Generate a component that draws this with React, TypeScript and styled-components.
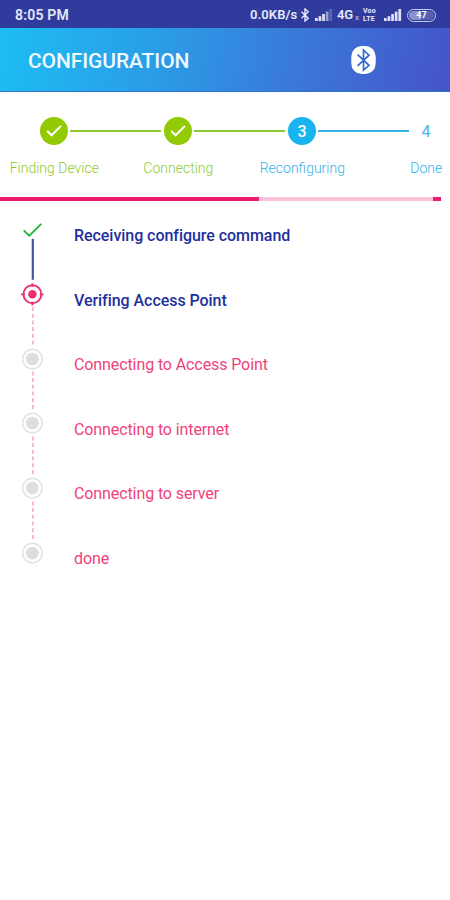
import React from "react";
import styled, { createGlobalStyle } from "styled-components";

const GlobalStyle = createGlobalStyle`
  * { box-sizing: border-box; }
  body { margin: 0; background: #fff; font-family: Roboto, "Liberation Sans", sans-serif; overflow: hidden; }
  svg { display: block; flex: none; }
`;

const Screen = styled.main`
  width: 450px;
  height: 900px;
  background: #fff;
  display: flex;
  flex-direction: column;
  overflow: hidden;
`;

const StatusBar = styled.div`
  flex: none;
  height: 28px;
  padding: 2px 14px 0 15px;
  background: #303c9d;
  color: #e6e9fa;
  display: flex;
  align-items: center;
  font-size: 14px;
  font-weight: 600;
  line-height: 26px;
  white-space: nowrap;
`;

const Clock = styled.span`
  flex: 1;
  letter-spacing: 0.2px;
`;

const Tray = styled.div`
  display: flex;
  align-items: center;
  height: 26px;
`;

const Speed = styled.span`
  width: 50px;
  font-size: 13px;
  letter-spacing: 0.1px;
`;

const Network = styled.span`
  width: 18px;
  margin-left: 4px;
  font-size: 13px;
  letter-spacing: -0.3px;
`;

const RoamMark = styled.span`
  width: 8px;
  font-size: 8px;
  padding-top: 5px;
  opacity: 0.6;
`;

const Volte = styled.span`
  width: 15px;
  margin-right: 6px;
  display: flex;
  flex-direction: column;
  font-size: 7px;
  line-height: 8px;
  font-weight: 700;
  letter-spacing: 0.2px;
`;

const Battery = styled.span`
  width: 29px;
  height: 13px;
  margin-left: 5px;
  border: 1.5px solid #c5caed;
  border-radius: 7px;
  padding: 1px;
  display: flex;
`;

const Charge = styled.span`
  flex: 1;
  border-radius: 5px;
  background: linear-gradient(90deg, #8991cf 50%, #5660b1 50%);
  font-size: 9px;
  line-height: 9px;
  font-weight: 700;
  text-align: center;
  color: #fff;
`;

const Header = styled.header`
  flex: none;
  height: 64px;
  padding: 1px 74px 0 28px;
  background: linear-gradient(100deg, #1dbdf3 0%, #2a9de7 35%, #3a79d9 65%, #4554c8 100%);
  border-bottom: 1px solid #2b74cf;
  display: flex;
  align-items: center;
  justify-content: space-between;
`;

const Title = styled.h1`
  margin: 0;
  color: #f0faff;
  font-size: 21px;
  font-weight: 500;
  line-height: 26px;
  letter-spacing: -0.1px;
  padding-top: 2px;
`;

const Stepper = styled.ol`
  flex: none;
  margin: 0;
  padding: 25px 0 0 40px;
  list-style: none;
  width: 443px;
  height: 105px;
  display: grid;
  grid-template-columns: 109px 109px 109px 30px;
  column-gap: 15px;
  overflow: hidden;
`;

const Step = styled.li<{ $color: string }>`
  color: ${(p) => p.$color};
  min-width: 0;
`;

const StepTrack = styled.div`
  display: flex;
  align-items: center;
  height: 28px;
`;

const StepDot = styled.span<{ $fill: string; $ink: string; $filled: boolean }>`
  flex: none;
  width: 28px;
  height: 28px;
  border-radius: 50%;
  background: ${(p) => p.$fill};
  color: ${(p) => p.$ink};
  display: flex;
  align-items: center;
  justify-content: center;
  font-size: 16px;
  font-weight: ${(p) => (p.$filled ? 500 : 400)};
`;

const Connector = styled.span`
  flex: none;
  width: 91px;
  height: 2.4px;
  margin-left: 2px;
  background: currentColor;
`;

const StepLabel = styled.div`
  width: 128px;
  margin: 14px 0 0 -49.7px;
  text-align: center;
  font-size: 14px;
  font-weight: 300;
  line-height: 18px;
`;

const Progress = styled.div`
  flex: none;
  width: 441px;
  height: 3.5px;
  background: #fbc3d9;
  display: flex;
  justify-content: space-between;
`;

const ProgressBar = styled.span<{ $width: number }>`
  width: ${(p) => p.$width}px;
  background: #ed1a6f;
`;

const Timeline = styled.ol`
  margin: 0;
  padding: 18.1px 0 0 20px;
  list-style: none;
`;

const Task = styled.li`
  height: 64.6px;
  display: flex;
  gap: 29px;
`;

const Rail = styled.div`
  width: 25px;
  display: flex;
  flex-direction: column;
  align-items: center;
`;

const TaskText = styled.span<{ $active: boolean }>`
  padding-top: 7.4px;
  font-size: 16px;
  line-height: 20px;
  letter-spacing: ${(p) => (p.$active ? "-0.05px" : "-0.1px")};
  white-space: nowrap;
  font-weight: ${(p) => (p.$active ? 500 : 400)};
  color: ${(p) => (p.$active ? "#1f2f9d" : "#ee427b")};
`;

function Signal({ dimmed }: { dimmed?: boolean }) {
  return (
    <svg width="18" height="12" viewBox="0 0 18 12" fill="#dfe3f8">
      <rect x="0" y="9" width="2.7" height="3" />
      <rect x="3.6" y="7.2" width="2.7" height="4.8" />
      <rect x="7.2" y="5" width="2.7" height="7" />
      <rect x="10.8" y="2.6" width="2.7" height="9.4" opacity={dimmed ? 0.6 : 1} />
      <rect x="14.4" y="0" width="2.7" height="12" opacity={dimmed ? 0.25 : 1} />
    </svg>
  );
}

function StepCheck() {
  return (
    <svg width="28" height="28" viewBox="0 0 28 28" fill="none">
      <path d="M7.2 14 L11.6 18.3 L21 8.9" stroke="#fff" strokeWidth="2" />
    </svg>
  );
}

type TaskState = "complete" | "current" | "pending";

function TaskMark({ state }: { state: TaskState }) {
  if (state === "complete") {
    return (
      <svg width="25" height="64.6" viewBox="0 0 25 64.6" fill="none">
        <path d="M3.7 11.4 L9.3 16.7 L21.3 4.9" stroke="#23b43a" strokeWidth="1.8" />
        <path d="M12.8 19.9 V60.8" stroke="#4953aa" strokeWidth="2.2" />
      </svg>
    );
  }
  return (
    <svg width="25" height="64.6" viewBox="0 0 25 64.6" fill="none">
      {state === "current" ? (
        <g stroke="#ed2f70">
          <circle cx="12.4" cy="11.3" r="9" strokeWidth="1.9" />
          <circle cx="12.4" cy="11.3" r="4.2" fill="#ed2f70" stroke="none" />
          <path d="M1.2 11.3 H5 M19.8 11.3 H23.6 M12.4 0.2 V3.7 M12.4 18.8 V22.4" strokeWidth="1.8" />
          <DashPath />
        </g>
      ) : (
        <g>
          <circle cx="12.4" cy="11.1" r="9.8" stroke="#e1e1e1" strokeWidth="1.5" />
          <circle cx="12.4" cy="11.1" r="6.4" fill="#dedede" />
        </g>
      )}
    </svg>
  );
}

function DashPath() {
  return <path d="M12.9 24 V62" stroke="#f4a0b9" strokeWidth="1.4" strokeDasharray="4 2.7" />;
}

const PendingTail = styled.div`
  width: 25px;
  height: 41px;
  margin-top: -41px;
`;

function Dashes() {
  return (
    <PendingTail>
      <svg width="25" height="41" viewBox="0 23.6 25 41" fill="none">
        <DashPath />
      </svg>
    </PendingTail>
  );
}

const steps = [
  { label: "Finding Device", color: "#8fc92f", fill: "#93ca06", ink: "#fff", mark: <StepCheck /> },
  { label: "Connecting", color: "#8fc92f", fill: "#93ca06", ink: "#fff", mark: <StepCheck /> },
  { label: "Reconfiguring", color: "#35b1e9", fill: "#17b4ef", ink: "#fff", mark: "3" },
  { label: "Done", color: "#35b1e9", fill: "transparent", ink: "#4cb6ea", mark: "4" },
];

const tasks: { text: string; state: TaskState }[] = [
  { text: "Receiving configure command", state: "complete" },
  { text: "Verifing Access Point", state: "current" },
  { text: "Connecting to Access Point", state: "pending" },
  { text: "Connecting to internet", state: "pending" },
  { text: "Connecting to server", state: "pending" },
  { text: "done", state: "pending" },
];

export default function App() {
  return (
    <>
      <GlobalStyle />
      <Screen>
        <StatusBar>
          <Clock>8:05 PM</Clock>
          <Tray>
            <Speed>0.0KB/s</Speed>
            <svg width="10" height="14" viewBox="0 0 10 14" fill="none" stroke="#e6e9fa" strokeWidth="1.4">
              <path d="M1.5 3.8 L8.2 10.2 L5 13 V1 L8.2 3.8 L1.5 10.2" />
            </svg>
            <svg width="5" height="1" />
            <Signal dimmed />
            <Network>4G</Network>
            <RoamMark>x</RoamMark>
            <Volte>
              <span>Voo</span>
              <span>LTE</span>
            </Volte>
            <Signal />
            <Battery>
              <Charge>47</Charge>
            </Battery>
          </Tray>
        </StatusBar>
        <Header>
          <Title>CONFIGURATION</Title>
          <svg width="25" height="30" viewBox="0 0 25 30" fill="none">
            <rect x="0.3" y="1" width="24.4" height="28" rx="10.5" fill="#fff" />
            <path d="M6.6 9.7 L18 20.3 L12.5 25.2 V5.2 L18 10.2 L6.6 20.8" stroke="#3569cc" strokeWidth="1.7" />
          </svg>
        </Header>
        <Stepper>
          {steps.map((step, i) => (
            <Step key={step.label} $color={step.color}>
              <StepTrack>
                <StepDot $fill={step.fill} $ink={step.ink} $filled={i < steps.length - 1}>
                  {step.mark}
                </StepDot>
                {i < steps.length - 1 && <Connector />}
              </StepTrack>
              <StepLabel>{step.label}</StepLabel>
            </Step>
          ))}
        </Stepper>
        <Progress>
          <ProgressBar $width={259} />
          <ProgressBar $width={8} />
        </Progress>
        <Timeline>
          {tasks.map((task, i) => (
            <Task key={task.text}>
              <Rail>
                <TaskMark state={task.state} />
                {task.state === "pending" && i < tasks.length - 1 && <Dashes />}
              </Rail>
              <TaskText $active={task.state !== "pending"}>{task.text}</TaskText>
            </Task>
          ))}
        </Timeline>
      </Screen>
    </>
  );
}
